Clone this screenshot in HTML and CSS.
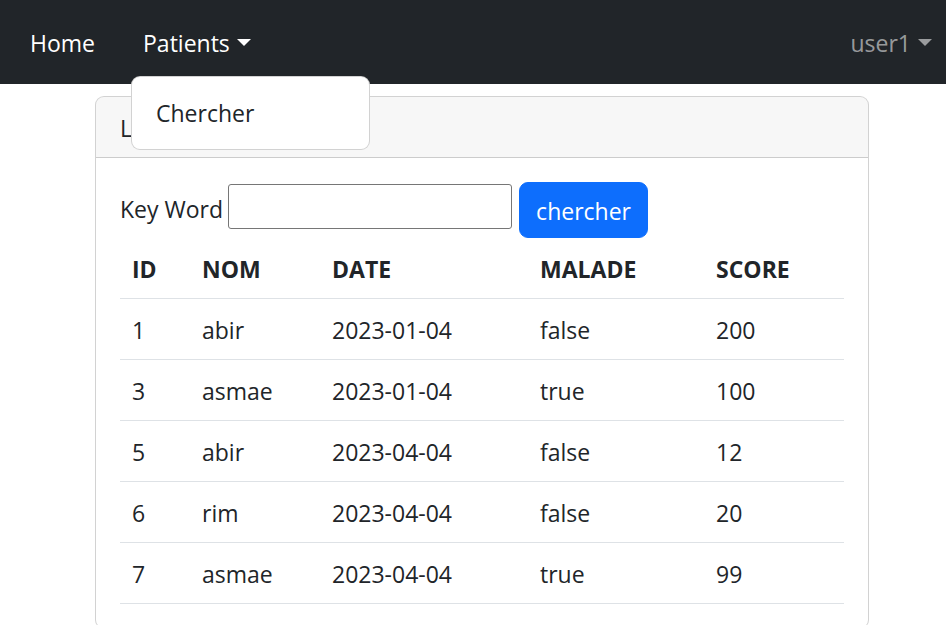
FILE: index.html
```html
<!DOCTYPE html>
<html lang="fr">
<head>
<meta charset="utf-8">
<title>Patients</title>
<link rel="stylesheet" href="styles.css">
</head>
<body>
<nav class="navbar">
  <ul class="nav-left">
    <li class="nav-item"><a class="nav-link" href="#">Home</a></li>
    <li class="nav-item dropdown">
      <a class="nav-link caret" href="#">Patients</a>
      <ul class="dropdown-menu">
        <li><a class="dropdown-item" href="#">Chercher</a></li>
      </ul>
    </li>
  </ul>
  <ul class="nav-right">
    <li class="nav-item"><a class="nav-link muted caret" href="#">user1</a></li>
  </ul>
</nav>

<div class="card">
  <div class="card-header">Liste Patients</div>
  <div class="card-body">
    <form class="search-form">
      <label class="search-label">Key Word</label>
      <input class="search-input" type="text">
      <button class="btn-primary" type="button">chercher</button>
    </form>
    <table class="table">
      <thead>
        <tr><th class="c-id">ID</th><th class="c-nom">NOM</th><th class="c-date">DATE</th><th class="c-malade">MALADE</th><th class="c-score">SCORE</th></tr>
      </thead>
      <tbody>
        <tr><td>1</td><td>abir</td><td>2023-01-04</td><td>false</td><td>200</td></tr>
        <tr><td>3</td><td>asmae</td><td>2023-01-04</td><td>true</td><td>100</td></tr>
        <tr><td>5</td><td>abir</td><td>2023-04-04</td><td>false</td><td>12</td></tr>
        <tr><td>6</td><td>rim</td><td>2023-04-04</td><td>false</td><td>20</td></tr>
        <tr><td>7</td><td>asmae</td><td>2023-04-04</td><td>true</td><td>99</td></tr>
      </tbody>
    </table>
  </div>
</div>
</body>
</html>
```

FILE: styles.css
```css
* { box-sizing: border-box; }
html, body { margin: 0; padding: 0; }
body {
  font-family: "Open Sans", "Noto Sans", sans-serif;
  font-size: 23px;
  line-height: 36px;
  color: #212529;
  background: #fff;
  overflow: hidden;
}
a { text-decoration: none; }
ul { list-style: none; margin: 0; padding: 0; }

.navbar {
  height: 84px;
  background: #212529;
  display: flex;
  align-items: center;
  justify-content: space-between;
  padding: 0 14px 0 18px;
}
.nav-left, .nav-right { display: flex; align-items: center; }
.nav-item { position: relative; }
.nav-item + .nav-item { margin-left: 24px; }
.nav-link {
  display: block;
  padding: 13px 12px 11px;
  color: #fff;
}
.nav-link.muted { color: rgba(255,255,255,.55); padding-right: 0; }
.caret::after {
  content: "";
  display: inline-block;
  margin-left: 7px;
  vertical-align: 6px;
  border-top: 7px solid;
  border-left: 7px solid transparent;
  border-right: 7px solid transparent;
  border-bottom: 0;
}

.dropdown-menu {
  position: absolute;
  top: 64px;
  left: 0;
  width: 239px;
  padding: 12px 0;
  background: #fff;
  border: 1px solid rgba(0,0,0,.175);
  border-radius: 9px;
  z-index: 10;
}
.dropdown-item {
  display: block;
  padding: 6px 24px;
  color: #212529;
}

.card {
  margin: 12px 0 0 95px;
  width: 774px;
  border: 1px solid rgba(0,0,0,.175);
  border-radius: 9px;
  background: #fff;
}
.card-header {
  padding: 13px 24px 11px;
  background: rgba(0,0,0,.03);
  border-bottom: 1px solid rgba(0,0,0,.175);
  border-radius: 8px 8px 0 0;
}
.card-body { padding: 24px 24px 0; }

.search-form {
  display: flex;
  align-items: flex-start;
  height: 56px;
}
.search-label { margin-top: 9px; margin-right: 5px; }
.search-input {
  margin-top: 2px;
  margin-right: 7px;
  width: 284px;
  height: 45px;
  border: 1px solid #767676;
  border-radius: 3px;
  font-size: 20px;
  padding: 2px 4px;
}
.btn-primary {
  height: 56px;
  width: 129px;
  padding: 2px 0 0;
  border: 1px solid #0d6efd;
  border-radius: 9px;
  background: #0d6efd;
  color: #fff;
  font-family: inherit;
  font-size: 23px;
  line-height: 36px;
}

.table {
  width: 724px;
  border-collapse: collapse;
  margin-bottom: 24px;
}
.table th, .table td {
  text-align: left;
  padding: 13px 12px 11px;
  border-bottom: 1px solid #dee2e6;
  vertical-align: top;
}
.table th { font-weight: 700; }
.c-id { width: 70px; }
.c-nom { width: 130px; }
.c-date { width: 208px; }
.c-malade { width: 176px; }
.c-score { width: 140px; }
```
